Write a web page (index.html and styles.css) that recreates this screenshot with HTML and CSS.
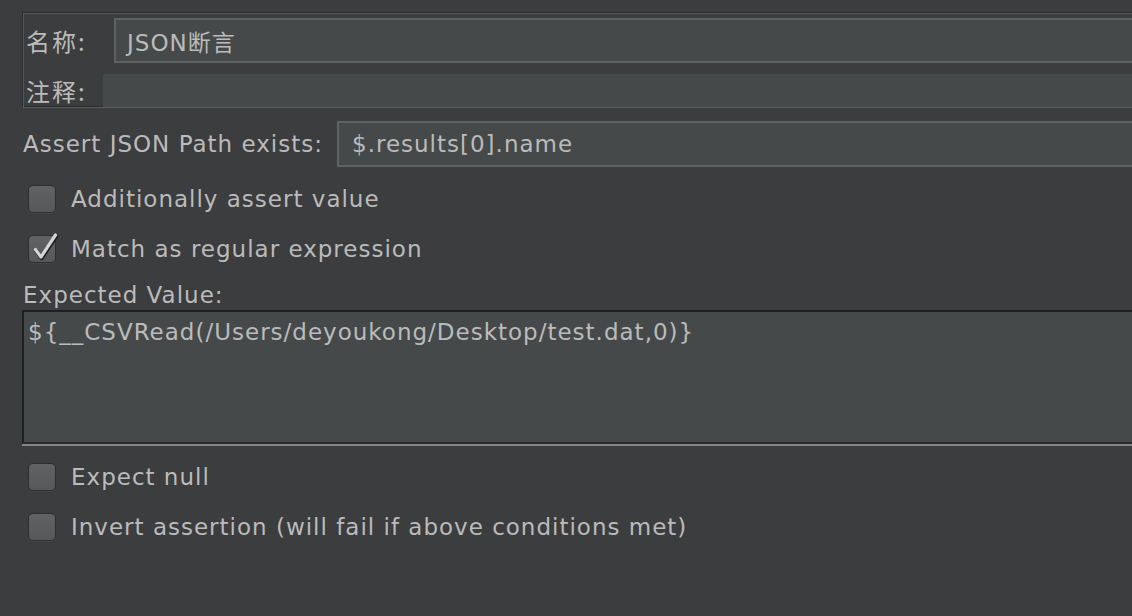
FILE: index.html
```html
<!DOCTYPE html>
<html lang="zh">
<head>
<meta charset="utf-8">
<title>JSON断言</title>
<link rel="stylesheet" href="styles.css">
</head>
<body>
<div class="page">
  <div class="frame">
    <div class="row name-row">
      <span class="label name-label">名称:</span>
      <div class="field name-field">JSON断言</div>
    </div>
    <div class="row comment-row">
      <span class="label comment-label">注释:</span>
      <div class="field comment-field"></div>
    </div>
  </div>

  <div class="row path-row">
    <span class="label path-label">Assert JSON Path exists:</span>
    <div class="field path-field">$.results[0].name</div>
  </div>

  <div class="check-row">
    <span class="box"></span>
    <span class="check-text">Additionally assert value</span>
  </div>
  <div class="check-row">
    <span class="box checked">
      <svg class="tick" viewBox="0 0 28 28" width="28" height="28" aria-hidden="true">
        <path d="M7.5 14.5 L13 22 L27.5 0" fill="none" stroke="#1c1d1e" stroke-width="4" stroke-linecap="round" stroke-linejoin="round" transform="translate(0.8 1.2)"/>
        <path d="M7.5 14.5 L13 22 L27.5 0" fill="none" stroke="#d4d4d4" stroke-width="3.2" stroke-linecap="round" stroke-linejoin="round"/>
      </svg>
    </span>
    <span class="check-text">Match as regular expression</span>
  </div>

  <div class="value-label">Expected Value:</div>
  <div class="textarea">${__CSVRead(/Users/deyoukong/Desktop/test.dat,0)}</div>

  <div class="check-row after-area">
    <span class="box"></span>
    <span class="check-text">Expect null</span>
  </div>
  <div class="check-row">
    <span class="box"></span>
    <span class="check-text">Invert assertion (will fail if above conditions met)</span>
  </div>
</div>
</body>
</html>
```

FILE: styles.css
```css
html, body {
  margin: 0;
  padding: 0;
  background: #3c3d3f;
  overflow: hidden;
  width: 1132px;
  height: 616px;
}

.page {
  font-family: "DejaVu Sans", "Noto Sans CJK SC", sans-serif;
  font-size: 23px;
  letter-spacing: 1px;
  color: #bbbbbb;
  width: 1132px;
  height: 616px;
  overflow: hidden;
}

.label {
  white-space: nowrap;
  flex: none;
}

.row {
  display: flex;
  align-items: center;
}

.field {
  background: #45494a;
  box-sizing: border-box;
  white-space: nowrap;
  flex: none;
  width: 1200px;
}

/* top etched frame */
.frame {
  margin: 12px 0 0 22px;
  width: 1200px;
  height: 96px;
  box-sizing: border-box;
  border-top: 1px solid #2b2c2e;
  border-left: 1px solid #2b2c2e;
  border-bottom: 1px solid #5b5c5e;
  box-shadow: inset 1px 1px 0 #56585a, inset 0 -1px 0 #2b2c2e;
  padding-top: 5px;
}

.name-label,
.comment-label {
  font-family: "Noto Sans CJK SC", sans-serif;
  font-size: 24px;
  letter-spacing: 2px;
  padding-left: 3px;
  box-sizing: border-box;
}

.name-label { width: 91px; }
.comment-label { width: 80px; }

.name-field {
  height: 45px;
  border: 2px solid #5f6163;
  padding-left: 11px;
  display: flex;
  align-items: center;
}

.comment-row {
  margin-top: 10px;
}

.comment-field {
  height: 33px;
}

/* assert path row */
.path-row {
  margin: 13px 0 0 23px;
}

.path-label {
  width: 314px;
}

.path-field {
  height: 46px;
  border: 2px solid #5f6163;
  padding-left: 13px;
  display: flex;
  align-items: center;
}

/* checkboxes */
.check-row {
  display: flex;
  align-items: center;
  height: 50px;
  padding-left: 28px;
}

.path-row + .check-row {
  margin-top: 7px;
}

.box {
  position: relative;
  flex: none;
  width: 28px;
  height: 28px;
  box-sizing: border-box;
  border: 1px solid #2d2e2f;
  border-radius: 5px;
  background: linear-gradient(#606264, #56585a);
  box-shadow: 0 1px 0 #454648;
}

.tick {
  position: absolute;
  left: -1px;
  top: -1px;
  overflow: visible;
}

.check-text {
  margin-left: 15px;
  white-space: nowrap;
}

/* expected value */
.value-label {
  margin: 6px 0 0 23px;
  height: 30px;
  line-height: 30px;
}

.textarea {
  margin-left: 22px;
  width: 1200px;
  height: 134px;
  box-sizing: border-box;
  background: #45494a;
  border-top: 2px solid #1f2021;
  border-left: 2px solid #1f2021;
  border-bottom: 2px solid #2a2b2c;
  box-shadow: 0 2px 0 #858687;
  padding: 4px 0 0 4px;
  line-height: 32px;
  white-space: nowrap;
}

.after-area {
  margin-top: 8px;
}
```
